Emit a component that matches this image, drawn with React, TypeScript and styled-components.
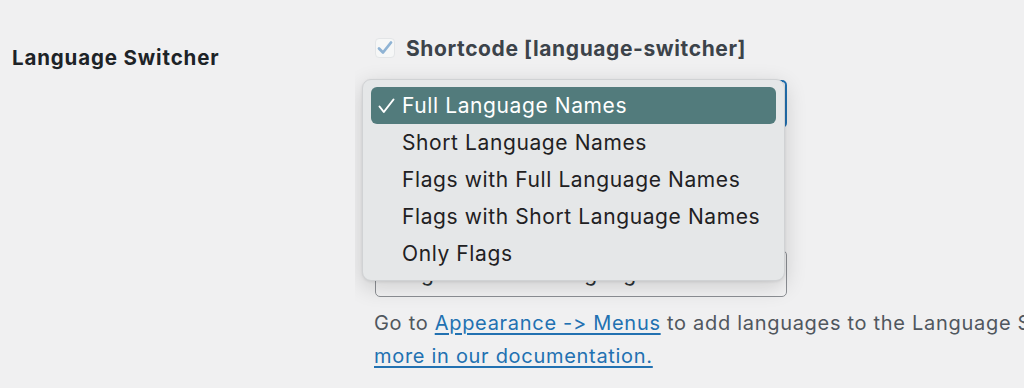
import React from 'react';
import styled, { createGlobalStyle } from 'styled-components';

const GlobalStyle = createGlobalStyle`
  html, body {
    margin: 0;
    padding: 0;
    background: #f0f0f1;
    font-family: Inter, "Liberation Sans", sans-serif;
    font-feature-settings: "calt" 0, "liga" 0;
    overflow: hidden;
  }
`;

const Page = styled.div`
  width: 1024px;
  height: 388px;
  box-sizing: border-box;
  padding: 37px 0 0 12px;
  overflow: hidden;
`;

const SettingRow = styled.div`
  display: grid;
  grid-template-columns: 343px 1fr;
  align-items: start;
`;

const Label = styled.div`
  font-size: 20.5px;
  font-weight: 700;
  color: #1d2327;
  line-height: 24px;
  padding-top: 9px;
  letter-spacing: 0.85px;
`;

/* padding leaves room for the open popup, which sticks out left of the select */
const Field = styled.div`
  display: flex;
  flex-direction: column;
  align-items: flex-start;
  min-width: 0;
  padding: 0 0 30px 20px;
  overflow: hidden;
`;

const CheckRow = styled.label`
  display: flex;
  align-items: center;
  gap: 11px;
  height: 22px;
  font-size: 21px;
  font-weight: 700;
  letter-spacing: 0.6px;
  color: #3c434a;
`;

const CheckBox = styled.span`
  width: 20px;
  height: 20px;
  box-sizing: border-box;
  border-radius: 4px;
  background: #f6f7f7;
  border: 1px solid #e3e5e7;
  display: inline-flex;
  align-items: center;
  justify-content: center;
`;

const SelectWrap = styled.div`
  position: relative;
  margin-top: 21px;
`;

const Select = styled.div<{ $focused?: boolean }>`
  width: 412px;
  height: 48px;
  box-sizing: border-box;
  border-radius: 5px;
  border: ${({ $focused }) => ($focused ? '2px solid #2271b1' : '1px solid #8c8f94')};
  background: #f3f3f4;
  display: flex;
  align-items: center;
  padding-left: 14px;
  font-size: 21px;
  letter-spacing: 0.6px;
  color: #2c3338;
`;

const SecondSelect = styled(Select)`
  margin-top: 122px;
  height: 47px;
`;

const Popup = styled.ul`
  position: absolute;
  left: -13px;
  top: -1px;
  width: 423px;
  box-sizing: border-box;
  margin: 0;
  padding: 7px 8px 8px 8px;
  list-style: none;
  background: #e5e7e8;
  border: 1px solid #d0d2d4;
  border-radius: 9px;
  box-shadow: 0 6px 22px rgba(0, 0, 0, 0.16), 0 1px 3px rgba(0, 0, 0, 0.08);
  z-index: 2;
`;

const Option = styled.li<{ $selected?: boolean }>`
  position: relative;
  height: 37px;
  display: flex;
  align-items: center;
  padding-left: 31px;
  border-radius: 6px;
  font-size: 21px;
  letter-spacing: 0.6px;
  color: ${({ $selected }) => ($selected ? '#ffffff' : '#1f2123')};
  background: ${({ $selected }) => ($selected ? '#527b7c' : 'transparent')};
`;

const Tick = styled.svg`
  position: absolute;
  left: 7px;
  top: 11px;
`;

const Description = styled.p`
  margin: 10px 0 0 -1px;
  font-size: 20px;
  line-height: 33px;
  letter-spacing: 0.7px;
  color: #50575e;
  white-space: nowrap;
`;

const DocLink = styled.a`
  color: #2271b1;
  text-decoration: underline;
  text-underline-offset: 3px;
`;

const options = [
  'Full Language Names',
  'Short Language Names',
  'Flags with Full Language Names',
  'Flags with Short Language Names',
  'Only Flags',
];

export default function App() {
  return (
    <>
      <GlobalStyle />
      <Page>
        <SettingRow>
          <Label>Language Switcher</Label>
          <Field>
            <CheckRow>
              <CheckBox>
                <svg width="18" height="18" viewBox="0 0 18 18">
                  <path
                    d="M3 9.5 L7 13.5 L15 3.5"
                    fill="none"
                    stroke="#8fb3d4"
                    strokeWidth="2.8"
                    strokeLinecap="round"
                    strokeLinejoin="round"
                  />
                </svg>
              </CheckBox>
              Shortcode [language-switcher]
            </CheckRow>
            <SelectWrap>
              <Select $focused>Full Language Names</Select>
              <Popup>
                {options.map((o, i) => (
                  <Option key={o} $selected={i === 0}>
                    {i === 0 && (
                      <Tick width="17" height="16" viewBox="0 0 17 16">
                        <path
                          d="M1.5 8.5 L5.8 14 L15.5 1.5"
                          fill="none"
                          stroke="#ffffff"
                          strokeWidth="2"
                          strokeLinecap="round"
                          strokeLinejoin="round"
                        />
                      </Tick>
                    )}
                    {o}
                  </Option>
                ))}
              </Popup>
            </SelectWrap>
            <SecondSelect>Flags with Full Language Names</SecondSelect>
            <Description>
              Go to <DocLink href="#">Appearance -&gt; Menus</DocLink> to add languages to the Language Switcher. Learn
              <br />
              <DocLink href="#">more in our documentation.</DocLink>
            </Description>
          </Field>
        </SettingRow>
      </Page>
    </>
  );
}
